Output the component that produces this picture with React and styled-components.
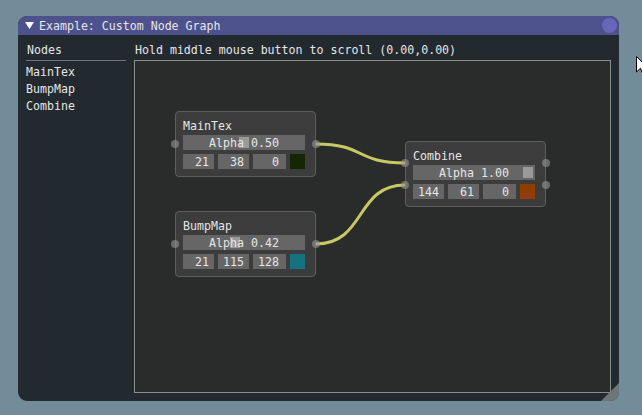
import React from 'react';
import styled, { createGlobalStyle } from 'styled-components';

const GlobalStyle = createGlobalStyle`
  html, body {
    margin: 0;
    padding: 0;
    background: #738c99;
  }
  * {
    box-sizing: border-box;
  }
`;

const Page = styled.div`
  position: relative;
  width: 642px;
  height: 415px;
  padding: 16px 0 0 18px;
  overflow: hidden;
  font-family: "DejaVu Sans Mono", "Liberation Mono", monospace;
  font-size: 11.6px;
  color: #e6e6e6;
`;

const Window = styled.div`
  position: relative;
  width: 601px;
  height: 385px;
  border-radius: 9px;
  overflow: hidden;
  background: #232a2f;
  display: flex;
  flex-direction: column;
`;

const TitleBar = styled.div`
  height: 19px;
  flex: none;
  display: flex;
  align-items: center;
  padding: 0 2px 0 7px;
  background: #4d518c;
  line-height: 13px;
`;

const TitleText = styled.span`
  flex: 1;
  margin-left: 5px;
  padding-top: 1px;
  white-space: pre;
`;

const CloseButton = styled.div`
  width: 15px;
  height: 15px;
  border-radius: 50%;
  background: #6667bb;
`;

const Body = styled.div`
  flex: 1;
  display: flex;
  gap: 8px;
  padding: 8px;
  min-height: 0;
`;

const NodeList = styled.div`
  width: 100px;
  flex: none;
  display: flex;
  flex-direction: column;
  gap: 4px;
`;

const Line = styled.div`
  height: 13px;
  line-height: 13px;
  padding-top: 1px;
  padding-left: ${(p) => p.$indent || 0}px;
  white-space: pre;
`;

const Separator = styled.div`
  height: 1px;
  background: #6e7377;
`;

const Main = styled.div`
  flex: 1;
  display: flex;
  flex-direction: column;
  gap: 4px;
  min-width: 0;
`;

const Canvas = styled.div`
  position: relative;
  flex: 1;
  border: 1px solid #8a8c8d;
  background: #2a2c2c;
  overflow: hidden;
`;

const Wires = styled.svg`
  position: absolute;
  left: 0;
  top: 0;
  width: 100%;
  height: 100%;
`;

const Node = styled.div`
  position: absolute;
  width: 141px;
  height: 66px;
  padding: 7px;
  border: 1px solid #5f5f5f;
  border-radius: 4px;
  background: #3c3c3c;
  display: flex;
  flex-direction: column;
  gap: 4px;
`;

const NodeTitle = styled.div`
  height: 13px;
  line-height: 13px;
  padding-top: 1px;
  margin-bottom: -1px;
`;

const Slider = styled.div`
  position: relative;
  width: 122px;
  height: 15px;
  line-height: 15px;
  padding-top: 1px;
  background: #666666;
  text-align: center;
  white-space: pre;
`;

const Grab = styled.div`
  position: absolute;
  top: 2px;
  width: 10px;
  height: 11px;
  background: #9a9a9a;
`;

const SliderLabel = styled.span`
  position: relative;
`;

const ColorRow = styled.div`
  display: flex;
  gap: 4px;
  height: 15px;
`;

const IntBox = styled.div`
  width: ${(p) => p.$w}px;
  height: 15px;
  line-height: 15px;
  padding-top: 1px;
  padding-right: ${(p) => p.$pad}px;
  background: #666666;
  text-align: right;
`;

const Swatch = styled.div`
  width: 15px;
  height: 15px;
  background: ${(p) => p.$color};
`;

const Pin = styled.div`
  position: absolute;
  width: 8px;
  height: 8px;
  border-radius: 50%;
  background: rgba(150, 150, 150, 0.6);
`;

const ResizeGrip = styled.div`
  position: absolute;
  right: 0;
  bottom: 0;
  width: 18px;
  height: 18px;
  background: #6f767a;
  clip-path: polygon(100% 0, 100% 100%, 0 100%);
`;

const Cursor = styled.svg`
  position: absolute;
  left: 636px;
  top: 56px;
`;

const nodes = [
  { name: 'MainTex', x: 40, y: 50, value: 0.5, rgb: [21, 38, 0], inputs: 1, outputs: 1 },
  { name: 'BumpMap', x: 40, y: 150, value: 0.42, rgb: [21, 115, 128], inputs: 1, outputs: 1 },
  { name: 'Combine', x: 270, y: 80, value: 1.0, rgb: [144, 61, 0], inputs: 2, outputs: 2 },
];

const links = [
  { from: 0, fromSlot: 0, to: 2, toSlot: 0 },
  { from: 1, fromSlot: 0, to: 2, toSlot: 1 },
];

const NODE_W = 141;
const NODE_H = 66;

const slotY = (node, slot, count) => node.y + (NODE_H * (slot + 1)) / (count + 1);

const App = () => {
  return (
    <Page>
      <GlobalStyle />
      <Window>
        <TitleBar>
          <svg width="9" height="7" viewBox="0 0 9 7">
            <polygon points="0,0 9,0 4.5,7" fill="#ffffff" />
          </svg>
          <TitleText>Example: Custom Node Graph</TitleText>
          <CloseButton />
        </TitleBar>
        <Body>
          <NodeList>
            <Line $indent={1}>Nodes</Line>
            <Separator />
            {nodes.map((n) => (
              <Line key={n.name}>{n.name}</Line>
            ))}
          </NodeList>
          <Main>
            <Line $indent={1}>Hold middle mouse button to scroll (0.00,0.00)</Line>
            <Canvas>
              <Wires>
                {links.map((l, i) => {
                  const a = nodes[l.from];
                  const b = nodes[l.to];
                  const x1 = a.x + NODE_W;
                  const y1 = slotY(a, l.fromSlot, a.outputs);
                  const x2 = b.x;
                  const y2 = slotY(b, l.toSlot, b.inputs);
                  return (
                    <path
                      key={i}
                      d={`M${x1} ${y1} C${x1 + 50} ${y1} ${x2 - 50} ${y2} ${x2} ${y2}`}
                      stroke="#c8c864"
                      strokeWidth="3"
                      fill="none"
                    />
                  );
                })}
              </Wires>
              {nodes.map((n) => (
                <Node key={n.name} style={{ left: n.x, top: n.y }}>
                  <NodeTitle>{n.name}</NodeTitle>
                  <Slider>
                    <Grab style={{ left: 2 + n.value * 108 }} />
                    <SliderLabel>Alpha {n.value.toFixed(2)}</SliderLabel>
                  </Slider>
                  <ColorRow>
                    <IntBox $w={31} $pad={5}>{n.rgb[0]}</IntBox>
                    <IntBox $w={31} $pad={5}>{n.rgb[1]}</IntBox>
                    <IntBox $w={33} $pad={7}>{n.rgb[2]}</IntBox>
                    <Swatch $color={`rgb(${n.rgb.join(',')})`} />
                  </ColorRow>
                  {Array.from({ length: n.inputs }).map((_, s) => (
                    <Pin key={`i${s}`} style={{ left: -5, top: (NODE_H * (s + 1)) / (n.inputs + 1) - 5 }} />
                  ))}
                  {Array.from({ length: n.outputs }).map((_, s) => (
                    <Pin key={`o${s}`} style={{ right: -5, top: (NODE_H * (s + 1)) / (n.outputs + 1) - 5 }} />
                  ))}
                </Node>
              ))}
            </Canvas>
          </Main>
        </Body>
        <ResizeGrip />
      </Window>
      <Cursor width="12" height="20" viewBox="0 0 12 20">
        <path d="M0.5 0.5 L0.5 16 L4.5 12.2 L7 18.5 L9.2 17.6 L6.8 11.5 L11.5 11.5 Z" fill="#ffffff" stroke="#000000" strokeWidth="1" />
      </Cursor>
    </Page>
  );
};

export default App;
